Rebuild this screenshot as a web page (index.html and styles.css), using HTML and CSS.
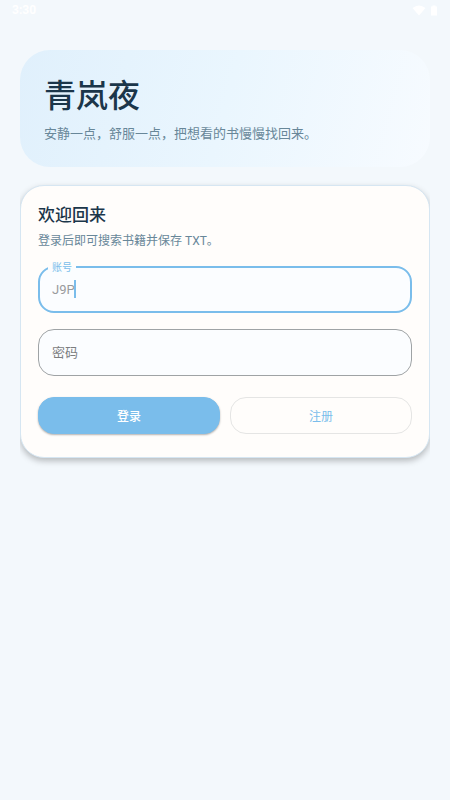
FILE: index.html
```html
<!DOCTYPE html>
<html lang="zh-CN">
<head>
    <meta charset="UTF-8">
    <meta name="viewport" content="width=device-width, initial-scale=1">
    <title>青岚夜</title>
    <link rel="stylesheet" href="styles.css">
</head>
<body>
    <header class="status-bar">
        <span class="status-time">3:30</span>
        <div class="status-icons">
            <svg width="14" height="11" viewBox="0 0 14 11"><path d="M0.5 3Q7 -2 13.5 3L7 10.5Z" fill="#fff"/></svg>
            <svg width="8" height="11" viewBox="0 0 8 11"><path d="M1 1.5h1.5V0.5h3v1H7V10.5H1Z" fill="#fff"/></svg>
        </div>
    </header>

    <main class="page">
        <section class="hero">
            <h1>青岚夜</h1>
            <p>安静一点，舒服一点，把想看的书慢慢找回来。</p>
        </section>

        <div class="card-wrap">
            <form class="card">
                <h2>欢迎回来</h2>
                <p class="card-hint">登录后即可搜索书籍并保存 TXT。</p>

                <div class="field field-active">
                    <label for="account">账号</label>
                    <input type="text" id="account" value="J9P">
                    <span class="caret"></span>
                </div>

                <div class="field">
                    <input type="password" id="password" placeholder="密码" aria-label="密码">
                </div>

                <div class="actions">
                    <button type="submit" class="btn btn-primary">登录</button>
                    <button type="button" class="btn btn-outline">注册</button>
                </div>
            </form>
        </div>
    </main>
</body>
</html>
```
FILE: styles.css
```css
* {
    box-sizing: border-box;
}
body {
    margin: 0;
    min-height: 100vh;
    background-color: #f3f8fc;
    color: #1b364a;
    font-family: Roboto, "Noto Sans CJK SC", sans-serif;
}
h1, h2, p {
    margin: 0;
}
.status-bar {
    display: flex;
    justify-content: space-between;
    align-items: center;
    height: 20px;
    padding: 0 12px;
    color: #fff;
}
.status-time {
    font-size: 12px;
    font-weight: 700;
}
.status-icons {
    display: flex;
    gap: 4px;
}
.status-icons svg {
    display: block;
}
.page {
    padding: 30px 20px;
}
.hero {
    padding: 24px;
    border-radius: 30px;
    background: linear-gradient(105deg, #e0f0fc 0%, #eaf6fe 50%, #f7fbff 100%);
}
.hero h1 {
    font-size: 32px;
    font-weight: 500;
    line-height: 45px;
}
.hero p {
    margin-top: 6px;
    font-size: 13px;
    line-height: 18px;
    color: #688799;
}
/* shadow only shows above and below the card */
.card-wrap {
    margin-top: 18px;
    clip-path: inset(-20px 0);
}
.card {
    padding: 17px;
    border: 1px solid #d6e6f2;
    border-radius: 24px;
    background-color: #fffdfb;
    box-shadow: 0 3px 6px rgba(0, 0, 0, 0.25);
}
.card h2 {
    font-size: 17px;
    font-weight: 500;
    line-height: 24px;
}
.card-hint {
    margin-top: 5px;
    font-size: 12px;
    line-height: 18px;
    color: #688799;
}
.field {
    position: relative;
    margin-top: 16px;
}
.field input {
    display: block;
    width: 100%;
    height: 47px;
    padding: 0 13px;
    border: 1px solid #9fa3a5;
    border-radius: 16px;
    outline: none;
    background-color: #fbfdff;
    color: #999b9d;
    font-family: inherit;
    font-size: 13px;
}
.field input::placeholder {
    color: #7c7d7f;
    opacity: 1;
}
.field-active input {
    padding: 0 12px;
    border: 2px solid #7abdeb;
}
.field label {
    position: absolute;
    top: -6px;
    left: 10px;
    padding: 1px 4px 0;
    background: linear-gradient(#fffdfb 50%, #fbfdff 50%);
    color: #7abdeb;
    font-size: 10px;
    line-height: 14px;
}
.caret {
    position: absolute;
    top: 14px;
    left: 36px;
    width: 2px;
    height: 18px;
    background-color: #7abdeb;
}
.actions {
    display: flex;
    gap: 10px;
    margin-top: 21px;
    padding-bottom: 6px;
}
.btn {
    flex: 1;
    height: 37px;
    border: 1px solid #e5e5e4;
    border-radius: 16px;
    background: none;
    color: #7abdeb;
    font-family: inherit;
    font-size: 12px;
    font-weight: 400;
    cursor: pointer;
}
.btn-primary {
    border-color: #7abdeb;
    background-color: #7abdeb;
    color: #fff;
    font-weight: 500;
    box-shadow: 0 1px 2px rgba(0, 0, 0, 0.3);
}
```
